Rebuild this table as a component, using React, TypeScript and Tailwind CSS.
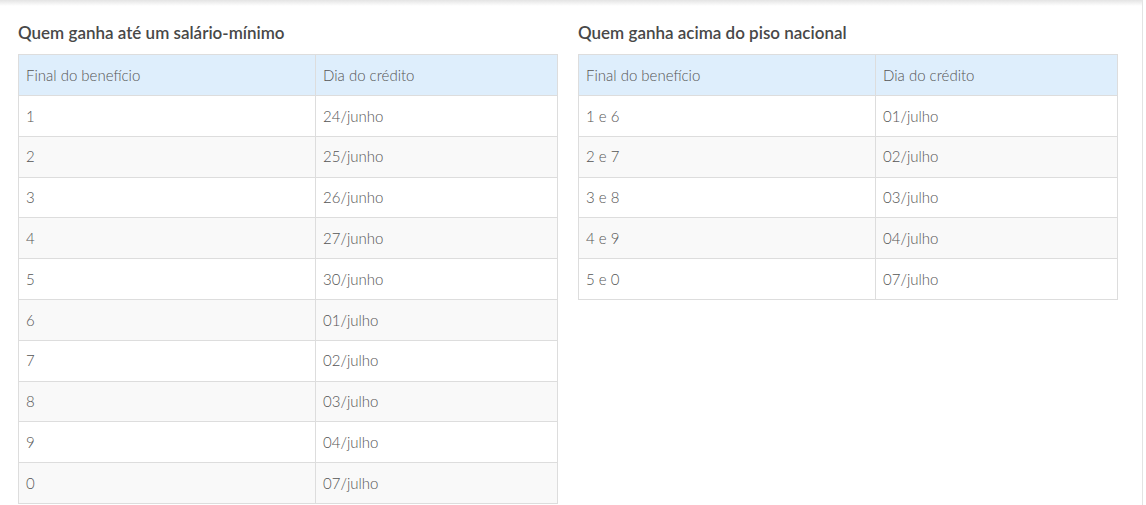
import React from "react";

const minimo: [string, string][] = [
  ["1", "24/junho"],
  ["2", "25/junho"],
  ["3", "26/junho"],
  ["4", "27/junho"],
  ["5", "30/junho"],
  ["6", "01/julho"],
  ["7", "02/julho"],
  ["8", "03/julho"],
  ["9", "04/julho"],
  ["0", "07/julho"],
];

const acima: [string, string][] = [
  ["1 e 6", "01/julho"],
  ["2 e 7", "02/julho"],
  ["3 e 8", "03/julho"],
  ["4 e 9", "04/julho"],
  ["5 e 0", "07/julho"],
];

function Tabela({ titulo, linhas }: { titulo: string; linhas: [string, string][] }) {
  return (
    <div className="w-[540px]">
      <h3 className="text-[17px] leading-[20px] font-semibold text-[#484848] mb-[11px]">{titulo}</h3>
      <table className="w-[540px] border-collapse text-[15px] font-light text-[#555]">
        <tbody>
          <tr className="bg-[#deeefc] h-[41px]">
            <td className="w-[297px] border border-[#ddd] pl-[7px]">Final do benefício</td>
            <td className="border border-[#ddd] pl-[7px]">Dia do crédito</td>
          </tr>
          {linhas.map(([final, dia], i) => (
            <tr key={final} className={i % 2 === 1 ? "bg-[#f9f9f9] h-[40.8px]" : "bg-white h-[40.8px]"}>
              <td className="border border-[#ddd] pl-[7px]">{final}</td>
              <td className="border border-[#ddd] pl-[7px]">{dia}</td>
            </tr>
          ))}
        </tbody>
      </table>
    </div>
  );
}

export default function App() {
  return (
    <div className="w-[1146px] h-[505px] bg-white overflow-hidden" style={{ fontFamily: "Lato, 'Open Sans', sans-serif" }}>
      <div className="w-[1143px] h-full border-r border-[#e3e3e3]">
        <div className="h-[6px] bg-gradient-to-b from-[#e4e4e4] to-white" />
        <div className="flex gap-[20px] pl-[18px] pt-[17px]">
          <Tabela titulo="Quem ganha até um salário-mínimo" linhas={minimo} />
          <Tabela titulo="Quem ganha acima do piso nacional" linhas={acima} />
        </div>
      </div>
    </div>
  );
}
